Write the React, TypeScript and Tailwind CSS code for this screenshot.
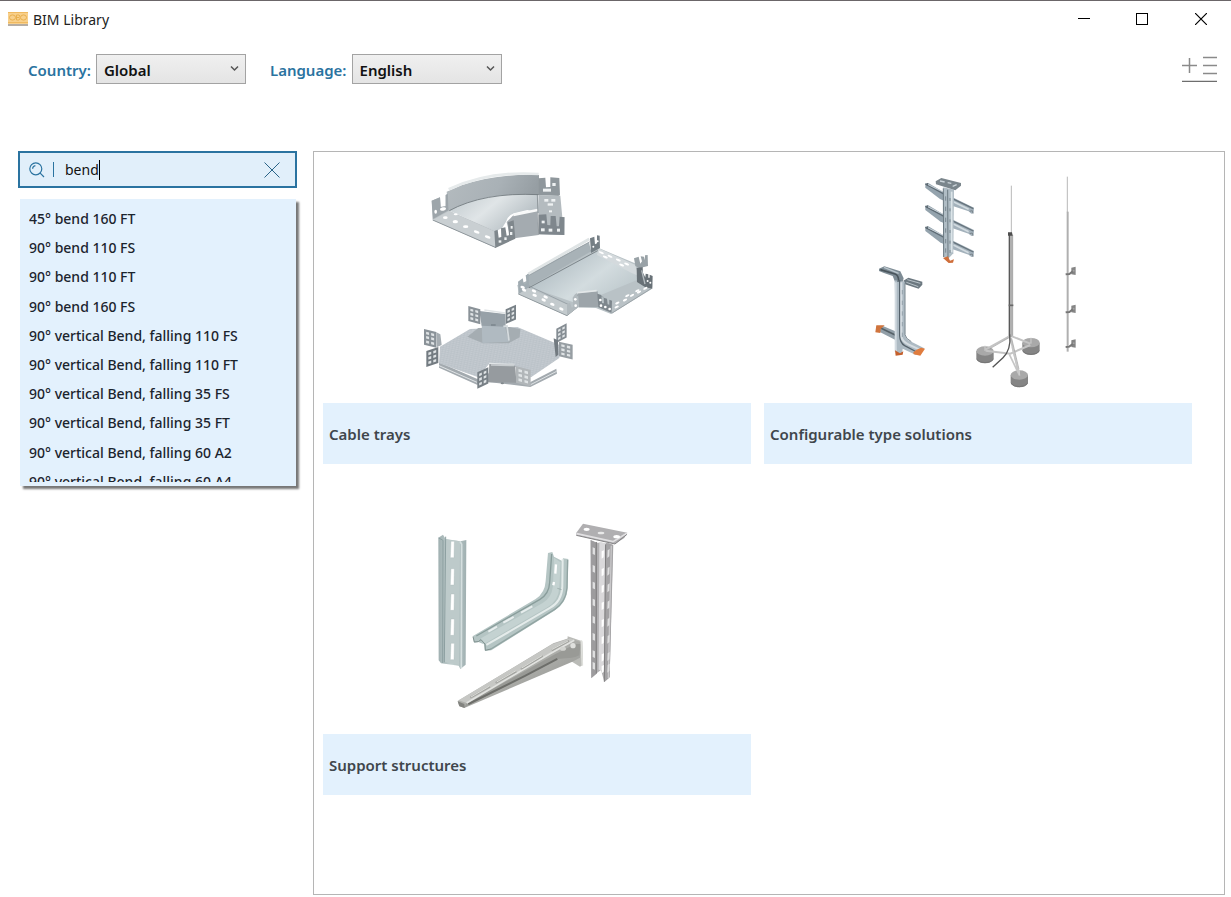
import type { ReactNode } from "react";
import { useState } from "react";

const results = [
  "45° bend 160 FT",
  "90° bend 110 FS",
  "90° bend 110 FT",
  "90° bend 160 FS",
  "90° vertical Bend, falling 110 FS",
  "90° vertical Bend, falling 110 FT",
  "90° vertical Bend, falling 35 FS",
  "90° vertical Bend, falling 35 FT",
  "90° vertical Bend, falling 60 A2",
  "90° vertical Bend, falling 60 A4",
];

function Picker({ id, label, options }: { id: string; label: string; options: string[] }) {
  return (
    <div className="flex items-center gap-[5px]">
      <label htmlFor={id} className="pt-[3px] text-[15px] font-semibold text-[#2a73a0]">
        {label}
      </label>
      <div className="relative">
        <select
          id={id}
          className="h-[30px] w-[150px] appearance-none border border-[#a3a3a3] bg-linear-to-b from-[#f0f0f0] to-[#e4e4e4] px-[7px] pt-[3px] text-[15px] font-semibold text-[#111] outline-none"
        >
          {options.map((o) => (
            <option key={o}>{o}</option>
          ))}
        </select>
        <svg className="pointer-events-none absolute top-[11px] right-[7px]" width="9" height="8" viewBox="0 0 9 8" fill="none" stroke="#555" strokeWidth="1.5">
          <path d="M1 1.5 4.5 5 8 1.5" />
        </svg>
      </div>
    </div>
  );
}

/* Flange end piece with a perforation of two columns and three rows. */
function Plate({ x, y, w, h, skew, fill }: { x: number; y: number; w: number; h: number; skew: number; fill: string }) {
  const cells = [0, 1, 2].flatMap((r) => [0, 1].map((c) => [c, r]));
  return (
    <g transform={`translate(${x} ${y}) skewY(${skew})`}>
      <rect width={w} height={h} fill={fill} />
      {cells.map(([c, r]) => (
        <rect key={`${c}-${r}`} x={w * (0.17 + c * 0.41)} y={h * (0.14 + r * 0.28)} width={w * 0.24} height={h * 0.16} fill="#dfe3e5" />
      ))}
    </g>
  );
}

function CableTrays() {
  return (
    <svg className="h-[242px] w-full" viewBox="0 0 428 242" role="img" aria-label="Cable trays">
      <defs>
        <linearGradient id="wall" x2="1" y2="0.2">
          <stop stopColor="#b4bbbf" />
          <stop offset="0.6" stopColor="#a9b1b6" />
          <stop offset="1" stopColor="#969ea3" />
        </linearGradient>
        <linearGradient id="floor" x2="1" y2="0.5">
          <stop stopColor="#bfc8cc" />
          <stop offset="0.5" stopColor="#e0e5e7" />
          <stop offset="1" stopColor="#b3bcc1" />
        </linearGradient>
        <linearGradient id="floor2" x2="1" y2="0.6">
          <stop stopColor="#a9b5bb" />
          <stop offset="0.35" stopColor="#bcc7cc" />
          <stop offset="0.65" stopColor="#d3dcdf" />
          <stop offset="1" stopColor="#bdc8cc" />
        </linearGradient>
        <pattern id="perf" width="9" height="6" patternUnits="userSpaceOnUse" patternTransform="rotate(12)">
          <rect width="9" height="6" fill="#bec5cb" />
          <rect x="1" y="1" width="4" height="1.5" fill="#d0d5da" />
          <rect x="5" y="4" width="3" height="1.2" fill="#b1b9c0" />
        </pattern>
      </defs>

      {/* 90° bend */}
      <g transform="translate(97 -1) scale(0.3333)">
        <path d="M88 152 105 126Q215 100 355 103L358 160 322 150 282 160Q262 168 258 185L246 205 226 214Z" fill="url(#floor)" />
        <path d="M280 166 352 150 356 225 272 236 260 186Z" fill="#a4abb0" />
        <path d="M80 95 125 76Q230 40 357 45L357 105Q190 94 86 154Z" fill="url(#wall)" />
        <path d="M86 88Q205 32 356 42" fill="none" stroke="#e6eaeb" strokeWidth="8" />
        <path d="M86 153Q190 96 356 104" fill="none" stroke="#6f777c" strokeWidth="2.5" />
        <path d="M35 122 60 112 62 141 77 139 77 105 85 100 88 153 226 213 228 263 40 181Z" fill="#bac1c5" />
        <path d="M38 180 87 153 227 216 227 263Z" fill="#c9cfd2" />
        <path d="M38 180 228 263" stroke="#8f979c" strokeWidth="3" />
        <path d="M35 122 60 112 62 141 77 139 77 105 84 101 86 151 38 178Z" fill="#9da5aa" />
        <g fill="#fff">
          <ellipse cx="69" cy="147" rx="9" ry="5" transform="rotate(-12 69 147)" />
          <ellipse cx="47" cy="155" rx="4" ry="6" />
          <ellipse cx="76" cy="173" rx="7" ry="4" />
          <ellipse cx="106" cy="185" rx="8" ry="5" />
          <ellipse cx="137" cy="200" rx="8" ry="4" />
          <ellipse cx="170" cy="216" rx="9" ry="4" transform="rotate(20 170 216)" />
          <ellipse cx="203" cy="231" rx="9" ry="4" transform="rotate(20 203 231)" />
          <ellipse cx="107" cy="163" rx="6" ry="3" />
        </g>
        <path d="M223 213 233 209 236 233 244 231 243 205 256 202 260 227 267 226 264 187 281 181 286 236 226 264Z" fill="#7f878c" />
        <path d="M356 55 376 53 378 82 391 81 391 52 418 54 420 105 415 108 356 105Z" fill="#8f979c" />
        <path d="M356 105 421 107 427 172 434 171 433 225 357 223Z" fill="#b4bbbf" />
        <path d="M356 164 379 163 382 195 391 196 392 168 407 168 410 199 417 199 419 170 433 172 433 225 357 223Z" fill="#7f878d" />
        <path d="M280 165 353 150" stroke="#f8f9f9" strokeWidth="7" />
        <path d="M352 103 356 224" stroke="#777f84" strokeWidth="2" />
        <g fill="#eef1f2">
          <rect x="369" y="86" width="24" height="9" />
          <rect x="397" y="69" width="10" height="9" />
          <rect x="373" y="117" width="12" height="8" />
          <rect x="394" y="117" width="12" height="8" />
          <rect x="383" y="130" width="16" height="7" />
          <rect x="387" y="151" width="9" height="6" />
          <rect x="365" y="182" width="9" height="8" />
          <rect x="363" y="205" width="11" height="9" />
          <rect x="386" y="206" width="11" height="9" />
          <rect x="411" y="206" width="9" height="9" />
          <rect x="236" y="241" width="8" height="7" />
          <rect x="253" y="232" width="7" height="8" />
          <rect x="270" y="216" width="7" height="9" />
          <rect x="272" y="198" width="6" height="8" />
        </g>
      </g>

      {/* T piece */}
      <g transform="translate(182 64) scale(0.3333)">
        <path d="M38 180 72 185 276 67 390 115 442 183 440 190 318 267 273 249 217 247 186 272 40 207Z" fill="#b9c2c6" />
        <path d="M72 185 281 78 411 159 282 212 273 196 220 201 205 232Z" fill="url(#floor2)" />
        <path d="M281 70 390 119 402 153 380 144 276 90Z" fill="#d4dadd" />
        <path d="M66 148 252 51 257 74 276 69 67 190 40 195 38 180 65 168Z" fill="#a8b2b7" />
        <path d="M70 147 253 42" stroke="#dfe4e5" strokeWidth="9" />
        <path d="M72 151 255 50" stroke="#8f999e" strokeWidth="2" />
        <path d="M67 191 278 77" stroke="#7d878c" strokeWidth="3" />
        <path d="M40 176 186 238 186 272 40 207Z" fill="#c3cacd" />
        <path d="M72 183 189 238M205 231 222 204M274 208 296 217" stroke="#899398" strokeWidth="2" />
        <path d="M40 207 186 272 217 247" fill="none" stroke="#939ca0" strokeWidth="3" />
        <path d="M39 170 53 160 57 179 65 174 62 151 71 147 72 187 42 206Z" fill="#a0abb1" />
        <path d="M255 40 268 35 270 58 276 55 276 31 284 32 285 69 258 84Z" fill="#757f85" />
        <path d="M186 237 195 233 200 248 205 246 203 218 210 208 216 204 220 247 186 271Z" fill="#b1b9bd" />
        <path d="M219 205 278 199 282 246 222 247Z" fill="#9da5aa" />
        <path d="M217 203 275 197" stroke="#e3e7e8" strokeWidth="5" />
        <path d="M277 206 289 210 291 234 297 235 296 218 306 221 308 238 313 239 313 224 321 227 320 264 280 247Z" fill="#7e878d" />
        <path d="M322 235 442 178 440 192 320 266Z" fill="#bac2c6" />
        <path d="M320 265 440 190" stroke="#8b9499" strokeWidth="2" />
        <path d="M387 100 401 95 406 116 411 109 407 94 417 95 420 106 420 91 428 90 429 123 402 130 391 122Z" fill="#99a2a7" />
        <path d="M395 129 413 126 414 143 421 158 422 146 430 148 430 158 434 158 434 149 443 153 442 191 421 187 396 171Z" fill="#687177" />
        <path d="M410 136 420 177" stroke="#b6bdc1" strokeWidth="4" />
        <g fill="#fff">
          {[[57, 195], [89, 211], [116, 225], [142, 238], [169, 252], [53, 187], [87, 198], [122, 216]].map(([x, y]) => (
            <ellipse key={`${x}${y}`} cx={x} cy={y} rx="7" ry="4" transform={`rotate(24 ${x} ${y})`} />
          ))}
          {[[289, 83], [315, 94], [340, 105], [365, 117], [301, 96], [350, 120]].map(([x, y]) => (
            <ellipse key={`${x}${y}`} cx={x} cy={y} rx="8" ry="3" transform={`rotate(24 ${x} ${y})`} />
          ))}
          {[[337, 234], [360, 225], [381, 211], [402, 201], [421, 190], [335, 246], [367, 212], [397, 197]].map(([x, y]) => (
            <ellipse key={`${x}-${y}`} cx={x} cy={y} rx="7" ry="3" transform={`rotate(-28 ${x} ${y})`} />
          ))}
          <circle cx="265" cy="65" r="3" />
          <circle cx="278" cy="49" r="3" />
          <circle cx="211" cy="223" r="4" />
          <circle cx="212" cy="242" r="4" />
          <circle cx="286" cy="225" r="4" />
          <circle cx="288" cy="242" r="4" />
          <circle cx="301" cy="246" r="4" />
          <circle cx="314" cy="252" r="4" />
          <circle cx="428" cy="168" r="3" />
          <circle cx="436" cy="173" r="3" />
        </g>
      </g>

      {/* Cross piece */}
      <g transform="translate(92 134) scale(0.3333)">
        <path d="M72 202 187 252 218 235 345 262 424 221 426 236 346 276 218 261 186 269 72 218Z" fill="#a3aaaf" />
        <path d="M72 212 186 262M347 269 425 229" stroke="#dfe3e5" strokeWidth="3" />
        <path d="M75 155 165 102 307 96 436 151 433 189 348 247 301 216 222 207 190 247 72 205Z" fill="url(#perf)" />
        <path d="M157 125 190 99 285 96 316 103 314 127 281 145 204 145Z" fill="#a5adb2" />
        <path d="M200 87 269 92 282 140 202 144Z" fill="#b0bac1" />
        <path d="M193 48 271 57 272 95 200 92Z" fill="#97a1a8" />
        <path d="M208 45 270 54M222 206 298 209" stroke="#e1e5e7" strokeWidth="5" />
        <rect x="228" y="88" width="14" height="4" fill="#78828a" />
        <path d="M265 94 276 93 282 137" fill="none" stroke="#d5dbde" strokeWidth="5" />
        <path d="M223 207 301 212 304 263 220 262Z" fill="#969b9f" />
        <path d="M228 208 298 208 297 214 228 212Z" fill="#c8cdd0" />
        <ellipse cx="262" cy="265" rx="5" ry="3" fill="#81888c" />
        <Plate x={160} y={33} w={36} h={45} skew={15} fill="#8a9298" />
        <Plate x={272} y={43} w={31} h={44} skew={-24} fill="#788187" />
        <Plate x={27} y={102} w={37} h={47} skew={14} fill="#8a9298" />
        <path d="M64 112 76 118 80 150 65 157Z" fill="#a6adb2" />
        <Plate x={34} y={168} w={36} h={48} skew={-18} fill="#737b81" />
        <Plate x={187} y={232} w={33} h={49} skew={-25} fill="#777f85" />
        <Plate x={303} y={213} w={44} h={50} skew={15} fill="#b1b6b9" />
        <Plate x={424} y={101} w={31} h={43} skew={-28} fill="#858d93" />
        <Plate x={432} y={140} w={41} h={44} skew={13} fill="#979ea3" />
        <path d="M416 130 429 136 430 179 422 186Z" fill="#727a80" />
      </g>
    </svg>
  );
}

/* One level of the cantilever rack: a left and a right arm. */
function Arms({ y }: { y: number }) {
  return (
    <g transform={`translate(0 ${y})`}>
      <path d="M196 0 205-1 255 29 255 54 240 47 196 13Z" fill="#94a3ad" />
      <path d="M196 2 255 34" stroke="#5f6c75" strokeWidth="4" />
      <path d="M203 3 250 26" stroke="#c6cfd5" strokeWidth="3" />
      <path d="M276 41 342 73 341 88 334 91 326 84 276 67Z" fill="#a3b1bb" />
      <path d="M276 45 340 76" stroke="#66737c" strokeWidth="4" />
      <path d="M280 55 326 78" stroke="#d2dbe0" strokeWidth="5" />
      <path d="M329 84 337 82 339 91" fill="none" stroke="#7a868d" strokeWidth="3" />
      <path d="M202 7V-1" stroke="#566169" strokeWidth="3" />
    </g>
  );
}

function Foot({ x, y }: { x: number; y: number }) {
  return (
    <g transform={`translate(${x} ${y})`}>
      <path d="M-26 0V24Q-22 36 0 37 22 36 26 24V0Z" fill="#858585" />
      <ellipse rx="26" ry="14" fill="#a9a9a9" />
      <path d="M-25 25Q-18 35 0 35 18 35 25 25" fill="none" stroke="#757575" strokeWidth="3" />
    </g>
  );
}

function Configurable() {
  return (
    <svg className="h-[242px] w-full" viewBox="0 0 428 242" role="img" aria-label="Configurable type solutions">
      {/* Cantilever rack and suspended profile */}
      <g transform="translate(96 4) scale(0.3333)">
        <Arms y={55} />
        <Arms y={122} />
        <Arms y={185} />
        <path d="M250 67 282 74 280 265 266 280 250 276Z" fill="#b0bdc5" />
        <path d="M263 74 264 278M250 70 251 276" stroke="#6b7982" strokeWidth="3" />
        <path d="M275 80V262" stroke="#dce5e9" strokeWidth="5" />
        <path d="M227 49 244 39 303 54 303 62 286 76 228 58Z" fill="#7b868c" />
        <path d="M240 48 254 51M278 64 290 59M263 53 274 55" stroke="#ccd5da" strokeWidth="4" />
        <path d="M249 279 264 274 270 287 282 283 279 293 266 294Z" fill="#cf6e3a" />
        {[94, 125, 158, 190, 222, 250].map((y) => (
          <path key={y} d={`M257 ${y}v13M270 ${y + 5}v9`} stroke="#7b8991" strokeWidth="3" />
        ))}

        <path d="M57 311 73 304 121 319 131 340 126 358 105 350 98 333 72 324 57 318Z" fill="#7e8c95" />
        <path d="M61 314 105 327Q116 331 116 348" fill="none" stroke="#4a555c" strokeWidth="5" />
        <path d="M72 307 116 325" stroke="#bbc6cd" strokeWidth="4" />
        <path d="M130 347 145 338 187 350 187 359 176 371 135 358Z" fill="#6c7880" />
        <path d="M142 344 181 355M139 352 175 365" stroke="#b9c3c9" strokeWidth="3" />
        <path d="M49 484 67 482 106 499 105 524 61 502Z" fill="#929fa8" />
        <path d="M62 489 107 511" stroke="#566168" strokeWidth="5" />
        <path d="M104 346 135 350 136 511Q138 523 151 529L193 550 168 570 128 551 126 568 109 568Z" fill="#adbac3" />
        <path d="M107 352V560" stroke="#d2dae0" strokeWidth="6" />
        <path d="M112 349 119 347 119 512Q120 534 134 542L170 561" fill="none" stroke="#55626b" strokeWidth="4" />
        <path d="M124 352V512Q125 529 145 538L184 556" fill="none" stroke="#d5dce1" strokeWidth="6" />
        <path d="M135 352V509Q137 521 154 530" fill="none" stroke="#7d8b94" strokeWidth="3" />
        {[375, 407, 439, 471, 503].map((y) => (
          <path key={y} d={`M127 ${y}v13`} stroke="#94a1aa" strokeWidth="3" />
        ))}
        <path d="M49 481 74 481 62 492 61 504 46 502Z" fill="#d0743d" />
        <path d="M105 556 120 565 130 559 128 569 107 572Z" fill="#c5602c" />
        <path d="M170 554 183 548 195 551 181 572 161 568 160 562Z" fill="#e07c3e" />
      </g>

      {/* Free-standing and wall-mounted masts */}
      <g transform="translate(196 4) scale(0.3333)" fill="none">
        <Foot x={213} y={533} />
        <Foot x={75} y={558} />
        <path d="M154 62V207" stroke="#aaa" strokeWidth="2.5" />
        <path d="M153 208V516" stroke="#b0b0b0" strokeWidth="9" />
        <path d="M148 205V514" stroke="#585858" strokeWidth="4" />
        <path d="M158 210V514" stroke="#8a8a8a" strokeWidth="2" />
        <path d="M144 202 156 202 158 212 144 212Z" fill="#4e4e4e" />
        <path d="M148 514 76 554M156 514 211 536M77 557 151 566 211 540M151 517 177 628" stroke="#c4c4c4" strokeWidth="6" />
        <path d="M149 517 90 551M155 520 177 613" stroke="#9a9a9a" strokeWidth="2" />
        <path d="M149 508Q154 554 129 578L98 607" stroke="#555" strokeWidth="4" />
        <path d="M146 421H160" stroke="#696969" strokeWidth="5" />
        <Foot x={178} y={630} />
        <path d="M157 547 179 632M148 568 178 630" stroke="#c6c6c6" strokeWidth="5" />
        <path d="M213 518V536M75 542V558M178 615V631" stroke="#cfcfcf" strokeWidth="3" />
        <path d="M322 35V142" stroke="#b8b8b8" strokeWidth="3" />
        <path d="M323 140V560" stroke="#b0b0b0" strokeWidth="6" />
        {[317, 431, 535].map((y) => (
          <g key={y}>
            <path d={`M334 ${y - 9}l13-3v25l-13-2Z`} fill="#858585" />
            <path d={`M317 ${y + 11}l11-1 13-10`} stroke="#777" strokeWidth="6" />
            <circle cx="341" cy={y} r="3" fill="#a3a3a3" />
          </g>
        ))}
      </g>
    </svg>
  );
}

function Supports() {
  return (
    <svg className="h-[242px] w-full" viewBox="0 0 428 242" role="img" aria-label="Support structures">
      <defs>
        <linearGradient id="zinc">
          <stop stopColor="#a0b0b1" />
          <stop offset="0.5" stopColor="#c3d0d0" />
          <stop offset="1" stopColor="#a0b0b1" />
        </linearGradient>
        <linearGradient id="steel" y2="1">
          <stop stopColor="#cdcecb" />
          <stop offset="0.5" stopColor="#acada9" />
          <stop offset="1" stopColor="#868784" />
        </linearGradient>
      </defs>
      <g transform="translate(102 18) scale(0.3333)">
        {/* C profile */}
        <path d="M40 83 54 74 62 87 106 94 124 90 122 464 106 477 101 467 48 460 41 451Z" fill="url(#zinc)" />
        <path d="M61 88 105 94 102 465 57 455Z" fill="#bdcaca" />
        <path d="M41 84 54 91 53 459M62 80 58 457" fill="none" stroke="#8da0a1" strokeWidth="3" />
        <path d="M105 94 110 103 109 475" fill="none" stroke="#d5dfdf" strokeWidth="5" />
        {[94, 176, 252, 327, 400].map((y) => (
          <path key={y} d={`M78 ${y}h10l-1 49h-11Z`} fill="#fff" stroke="#a7b5b6" strokeWidth="1" />
        ))}

        {/* Bent bracket */}
        <path d="M369 129 382 126 387 140 412 153 414 145 430 147 428 231Q427 277 388 302L199 421 180 423 177 403 160 396 147 398 144 378 332 267Q360 249 362 213Z" fill="#b5c5c4" />
        <path d="M380 132 374 218Q372 252 345 268L154 378" fill="none" stroke="#899d9b" strokeWidth="4" />
        <path d="M387 143 384 228Q380 264 353 279L168 385 177 402 367 292Q401 273 403 232L407 157Z" fill="#c4d2d1" />
        <path d="M413 148 412 230Q410 275 375 294L184 405" fill="none" stroke="#e4ebea" strokeWidth="6" />
        <path d="M428 150 426 234Q422 277 389 298L198 417" fill="none" stroke="#91a4a2" strokeWidth="4" />
        <path d="M393 163 391 191M387 216 385 226" stroke="#fff" strokeWidth="7" />
        <path d="M288 308 322 289M235 338 266 321M190 365 216 350" stroke="#e8eeee" strokeWidth="6" />
        <path d="M144 380 148 396 160 395 168 389 180 402 181 421 198 417" fill="none" stroke="#7d8f8d" strokeWidth="3" />
        <path d="M397 235 410 239" stroke="#8fa09e" strokeWidth="2" />

        {/* Cantilever arm */}
        <path d="M428 379 472 394 474 464 465 470 428 447Z" fill="#babbb7" />
        <path d="M98 573 385 400 433 384 469 397 465 443 442 455 118 594 103 588Z" fill="url(#steel)" />
        <path d="M101 571 382 403 435 385 448 389 125 579Z" fill="#c6c7c4" />
        <path d="M125 580 390 433 452 402 467 402 463 436Q444 446 431 444L397 447 117 593Z" fill="#999a96" />
        <path d="M130 582 300 498 397 447" fill="none" stroke="#6d6e6a" strokeWidth="6" />
        <path d="M125 579 374 432 448 391" fill="none" stroke="#e2e3e0" strokeWidth="5" />
        <path d="M380 421 432 393M288 477 353 438M212 519 274 484M136 563 195 530" stroke="#a3a4a0" strokeWidth="6" />
        <path d="M380 419 429 393M290 474 351 437M215 516 273 482M138 561 194 528" stroke="#dcddd9" strokeWidth="3" />
        <circle cx="444" cy="407" r="8" fill="#e0e1de" />
        <ellipse cx="414" cy="416" rx="9" ry="6" fill="#d2d3cf" />
        <path d="M98 574 118 582 119 594 103 589Z" fill="#82837f" />
        <path d="M469 391 472 467" stroke="#dedfdb" strokeWidth="5" />

        {/* Suspended support */}
        <path d="M497 91 515 98 531 98 540 105 549 98 565 105 554 502 538 516 528 480 513 491 499 505Z" fill="#b2b1b3" />
        <path d="M523 96 541 99 536 482 521 479Z" fill="#dad9db" />
        <path d="M497 90 515 98 514 492 499 504Z" fill="#9d9c9e" />
        <path d="M542 98 564 105 554 502 538 516Z" fill="#a3a2a4" />
        <path d="M514 96V491M542 103 538 515" stroke="#7f7e80" strokeWidth="3" />
        <path d="M559 107 550 504" stroke="#c9c8ca" strokeWidth="4" />
        {[112, 165, 215, 266, 318, 369, 421, 456].map((y) => (
          <g key={y} fill="#dfdfe0">
            <path d={`M503 ${y}l7 3v20l-7-3Z`} />
            <path d={`M548 ${y + 9}l6-4-1 22-6 5Z`} />
            <path d={`M530 ${y + 12}l7-3-1 21-6 4Z`} fill="#fff" />
          </g>
        ))}
        <path d="M454 68 474 41 607 68 598 84 570 102 454 76Z" fill="#b0afb1" />
        <path d="M455 71 564 95 606 70" fill="none" stroke="#e1e0e2" strokeWidth="5" />
        <path d="M454 76 570 102 606 73" fill="none" stroke="#858486" strokeWidth="3" />
        <ellipse cx="485" cy="58" rx="9" ry="5" fill="#fff" />
        <ellipse cx="528" cy="69" rx="10" ry="4" fill="#e9e9e9" />
        <ellipse cx="575" cy="80" rx="10" ry="5" fill="#fff" />
      </g>
    </svg>
  );
}

function Card({ title, children }: { title: string; children: ReactNode }) {
  return (
    <a href="#" className="block">
      {children}
      <div className="flex h-[61px] items-center bg-[#e3f1fd] px-1.5 pt-0.5 text-[15px] font-semibold text-[#3f464c]">{title}</div>
    </a>
  );
}

export default function App() {
  const [query, setQuery] = useState("bend");
  return (
    <div className="flex min-h-screen flex-col border-t border-[#6b6669] bg-white font-['Noto_Sans','Open_Sans',sans-serif]">
      <header className="flex h-9 items-center justify-between pl-2">
        <div className="flex items-center gap-[5px]">
          <svg width="20" height="14" viewBox="0 0 20 14">
            <rect width="20" height="12" fill="#f8d08c" />
            <path d="M0 13H20" stroke="#b5ada4" strokeWidth="2" />
            <path d="M0 .5H20M0 10.5H20" stroke="#efb960" />
            <g fill="none" stroke="#e9b04f">
              <ellipse cx="4.5" cy="5.5" rx="3" ry="2.6" />
              <path d="M8.5 3h2.5l1 1.2-1 1.3 1 1.2-1 1.3H8.5ZM8.5 5.5h2.5" />
              <ellipse cx="15.5" cy="5.5" rx="3" ry="2.6" />
            </g>
          </svg>
          <h1 className="text-[14px] text-[#222]">BIM Library</h1>
        </div>
        <div className="flex">
          <button aria-label="Minimize" className="flex h-9 w-[58px] items-center justify-center">
            <svg width="12" height="12" viewBox="0 0 12 12" stroke="#000" shapeRendering="crispEdges">
              <path d="M0 5.5H12" />
            </svg>
          </button>
          <button aria-label="Maximize" className="flex h-9 w-[58px] items-center justify-center">
            <svg width="12" height="12" viewBox="0 0 12 12" stroke="#000" fill="none" shapeRendering="crispEdges">
              <path d="M.5.5H11.5V11.5H.5Z" />
            </svg>
          </button>
          <button aria-label="Close" className="flex h-9 w-[60px] items-center justify-center">
            <svg width="12" height="12" viewBox="0 0 12 12" stroke="#000" strokeWidth="1.2">
              <path d="M0 0 12 12M12 0 0 12" />
            </svg>
          </button>
        </div>
      </header>

      <div className="flex items-start justify-between pt-[17px] pr-[13px] pb-[67px] pl-7">
        <div className="flex gap-6">
          <Picker id="country" label="Country:" options={["Global", "Germany", "Austria"]} />
          <Picker id="language" label="Language:" options={["English", "Deutsch"]} />
        </div>
        <button aria-label="Add to list">
          <svg width="36" height="28" viewBox="0 0 36 28" fill="none" strokeWidth="1.5">
            <path d="M0 11.5H15M7.5 4V19M21 3.5H35M21 11.5H35M21 19.5H35" stroke="#8a8a8a" />
            <path d="M0 27.5H35" stroke="#6e6e6e" />
          </svg>
        </button>
      </div>

      <main className="flex flex-1 gap-4 pr-1.5 pb-0.5 pl-[18px]">
        <aside className="w-[279px] shrink-0">
          <div className="flex h-[37px] items-center border-2 border-[#2a73a0] bg-[#e1effa] pr-[15px] pl-[9px]">
            <svg width="16" height="16" viewBox="0 0 16 16" fill="none" stroke="#2a73a0" strokeWidth="1.2">
              <circle cx="6.8" cy="6.8" r="6" />
              <path d="M11.2 11.2 15 15M3.6 6.8Q3.8 4 6.4 3.6" />
            </svg>
            <span className="ml-2 h-[15px] w-px bg-[#2a73a0]" />
            <div className="ml-[11px] flex flex-1 items-center">
              <input
                aria-label="Search"
                value={query}
                onChange={(e) => setQuery(e.target.value)}
                className="field-sizing-content bg-transparent text-[14px] text-[#111] caret-transparent outline-none"
              />
              <span className="h-5 w-px bg-black" />
            </div>
            <button aria-label="Clear search" onClick={() => setQuery("")}>
              <svg width="16" height="16" viewBox="0 0 16 16" stroke="#2a6488">
                <path d="M.5.5 15.5 15.5M15.5.5 .5 15.5" />
              </svg>
            </button>
          </div>

          <div className="mt-[11px] mr-px ml-0.5 h-[287px] bg-[#e3f1fd] pt-[5px] pl-[9px] shadow-[3px_3px_2px_#777]">
            <div className="h-[278px] overflow-hidden">
              <ul className="grid h-[292px] grid-rows-10 text-[14px] font-medium text-[#1b242d]">
                {results.map((r) => (
                  <li key={r} className="flex items-center">
                    {r}
                  </li>
                ))}
              </ul>
            </div>
          </div>
        </aside>

        <section className="grid flex-1 grid-cols-2 content-start gap-x-[13px] gap-y-7 border border-[#b5b5b5] pt-[9px] pr-8 pl-[9px]">
          <Card title="Cable trays">
            <CableTrays />
          </Card>
          <Card title="Configurable type solutions">
            <Configurable />
          </Card>
          <Card title="Support structures">
            <Supports />
          </Card>
        </section>
      </main>
    </div>
  );
}
